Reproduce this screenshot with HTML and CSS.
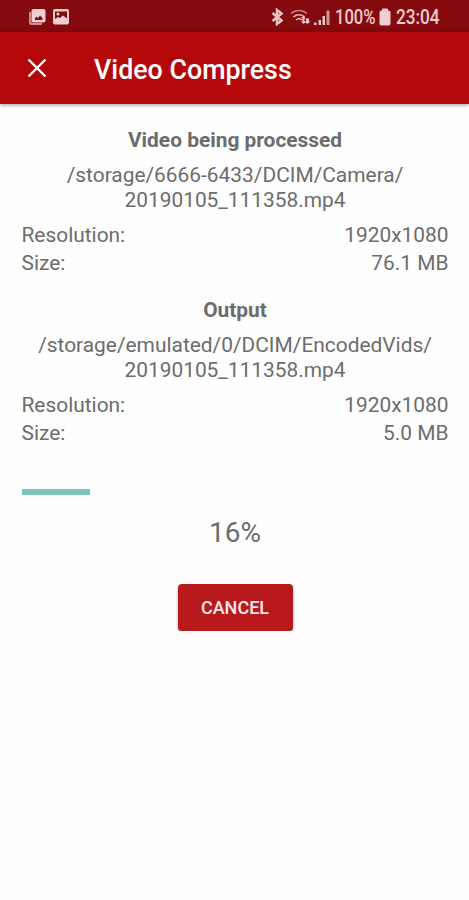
FILE: index.html
```html
<!DOCTYPE html>
<html lang="en">
<head>
    <meta charset="UTF-8">
    <title>Video Compress</title>
    <link rel="stylesheet" href="styles.css">
</head>
<body>
    <div class="status-bar">
        <div class="status-left">
            <svg width="18" height="18" viewBox="0 0 18 18">
                <path d="M3 4H2a1 1 0 0 0-1 1v10a2 2 0 0 0 2 2h10a1 1 0 0 0 1-1v-1H5a2 2 0 0 1-2-2z" fill="#c98b8f"/>
                <rect x="3.500" y="1" width="14" height="13.500" rx="2" fill="#f0cfd2"/>
                <path d="M7 12v-2l1.500-1.500 1.500 1.500 2-2.500 2.500 2.500v2z" fill="#850a0e"/>
            </svg>
            <svg width="18" height="18" viewBox="0 0 18 18">
                <rect x="1" y="1" width="16" height="15.500" rx="2" fill="#f0cfd2"/>
                <path d="M3 3.500h12v7l-4-3-3 2.500-2-1-3 2z" fill="#850a0e"/>
                <circle cx="6" cy="6" r="1.500" fill="#f0cfd2"/>
            </svg>
        </div>
        <div class="status-right">
            <svg class="bluetooth" width="12" height="18" viewBox="0 0 12 18">
                <path d="M1.500 5l9 7.500-4.500 3.500v-14l4.500 3.500L1.500 13" fill="none" stroke="#e9c4c7" stroke-width="2.500"/>
            </svg>
            <svg class="wifi" width="21" height="18" viewBox="0 0 21 18">
                <g fill="none" stroke="#c77b80" stroke-width="1.600">
                    <path d="M1 5.500a12 12 0 0 1 16 0"/>
                    <path d="M3.500 9a8 8 0 0 1 11 0" stroke="#e3b4b7"/>
                    <path d="M6 12a4.500 4.500 0 0 1 6 0" stroke="#e3b4b7"/>
                </g>
                <path d="M11 10l2.500-2 2.500 2.500h-1.500v3H16l-2.500 2.500L11 13.500h1.500V10zM16 10.500h3v3h1.500L17.500 16 15 13.500h1z" fill="#e9c4c7"/>
            </svg>
            <svg class="signal" width="17" height="17" viewBox="0 0 17 17">
                <path d="M0 13.500h2.500V16H0zM4.500 11h2.500v5H4.500zM8.500 7H11v9H8.500z" fill="#e9c4c7"/>
                <path d="M12.500 1.500h3V16h-3z" fill="#d19599"/>
            </svg>
            <span class="battery-text">100%</span>
            <svg class="battery" width="12" height="18" viewBox="0 0 12 18">
                <path d="M3.500 1h5v2H10a1 1 0 0 1 1 1v12a1 1 0 0 1-1 1H2a1 1 0 0 1-1-1V4a1 1 0 0 1 1-1h1.500z" fill="#f0cfd2" stroke="#f0cfd2"/>
            </svg>
            <span class="clock">23:04</span>
        </div>
    </div>

    <div class="app-bar">
        <svg class="close-icon" width="20" height="20" viewBox="0 0 20 20">
            <path d="M1.500 1.500l17 17M18.500 1.500l-17 17" stroke="#fff" stroke-width="2.400"/>
        </svg>
        <h1>Video Compress</h1>
    </div>

    <div class="content">
        <div class="video-info">
            <h2>Video being processed</h2>
            <p class="path">/storage/6666-6433/DCIM/Camera/<br>20190105_111358.mp4</p>
            <div class="row"><span>Resolution:</span><span>1920x1080</span></div>
            <div class="row"><span>Size:</span><span>76.1 MB</span></div>
        </div>

        <div class="video-info">
            <h2>Output</h2>
            <p class="path">/storage/emulated/0/DCIM/EncodedVids/<br>20190105_111358.mp4</p>
            <div class="row"><span>Resolution:</span><span>1920x1080</span></div>
            <div class="row"><span>Size:</span><span>5.0 MB</span></div>
        </div>

        <div class="progress">
            <div class="progress-bar" style="width: 16%"></div>
        </div>
        <p class="percent">16%</p>

        <button class="cancel-btn">CANCEL</button>
    </div>
</body>
</html>
```
FILE: styles.css
```css
body {
    margin: 0;
    font-family: Roboto, "Liberation Sans", sans-serif;
    background-color: #fefefe;
    color: #6c6c6c;
}

h1, h2, p {
    margin: 0;
}

svg {
    display: block;
    flex: none;
}

.status-bar {
    display: flex;
    justify-content: space-between;
    align-items: center;
    box-sizing: border-box;
    height: 32px;
    padding: 2px 30px 0 28px;
    background: #850a0e;
    color: #efcdd0;
    font-size: 20px;
}

.status-left,
.status-right {
    display: flex;
    align-items: center;
}

.status-left {
    gap: 6px;
}

.wifi {
    margin-left: 7px;
}

.signal {
    margin-left: 3px;
}

/* narrow digits */
.battery-text,
.clock {
    white-space: nowrap;
    font-weight: 500;
    transform-origin: left center;
}

.battery-text {
    width: 40px;
    margin-left: 4px;
    transform: scaleX(0.83);
}

.battery {
    margin: 0 5px 0 4px;
}

.clock {
    width: 43px;
    transform: scaleX(0.86);
}

.app-bar {
    display: flex;
    align-items: center;
    height: 72px;
    padding: 0 27px;
    background: #b40709;
    color: #fff;
    box-shadow: 0 1px 4px rgba(0, 0, 0, 0.4);
}

.app-bar h1 {
    margin: 4px 0 0 47px;
    font-size: 26.8px;
    font-weight: 500;
}

.content {
    display: flex;
    flex-direction: column;
    padding: 24px 20.5px 0 21.5px;
    font-size: 20.9px;
}

.video-info {
    margin-bottom: 19px;
}

.video-info h2 {
    font-size: 20.9px;
    font-weight: 700;
    line-height: 25px;
    text-align: center;
}

.path {
    margin: 10px 0;
    line-height: 25px;
    text-align: center;
}

.row {
    display: flex;
    justify-content: space-between;
    line-height: 25px;
    margin-bottom: 3px;
}

.progress {
    height: 6px;
    margin-top: 21px;
}

.progress-bar {
    height: 100%;
    background: #7cc5bc;
}

.percent {
    margin-top: 21px;
    font-size: 28px;
    line-height: 34px;
    text-align: center;
}

.cancel-btn {
    align-self: center;
    width: 115px;
    height: 47px;
    margin-top: 34px;
    padding: 0;
    border: none;
    border-radius: 4px;
    background: #b9191d;
    color: #fbe9ea;
    font: 500 18px Roboto, "Liberation Sans", sans-serif;
    box-shadow: 0 2px 3px rgba(0, 0, 0, 0.35);
}
```
